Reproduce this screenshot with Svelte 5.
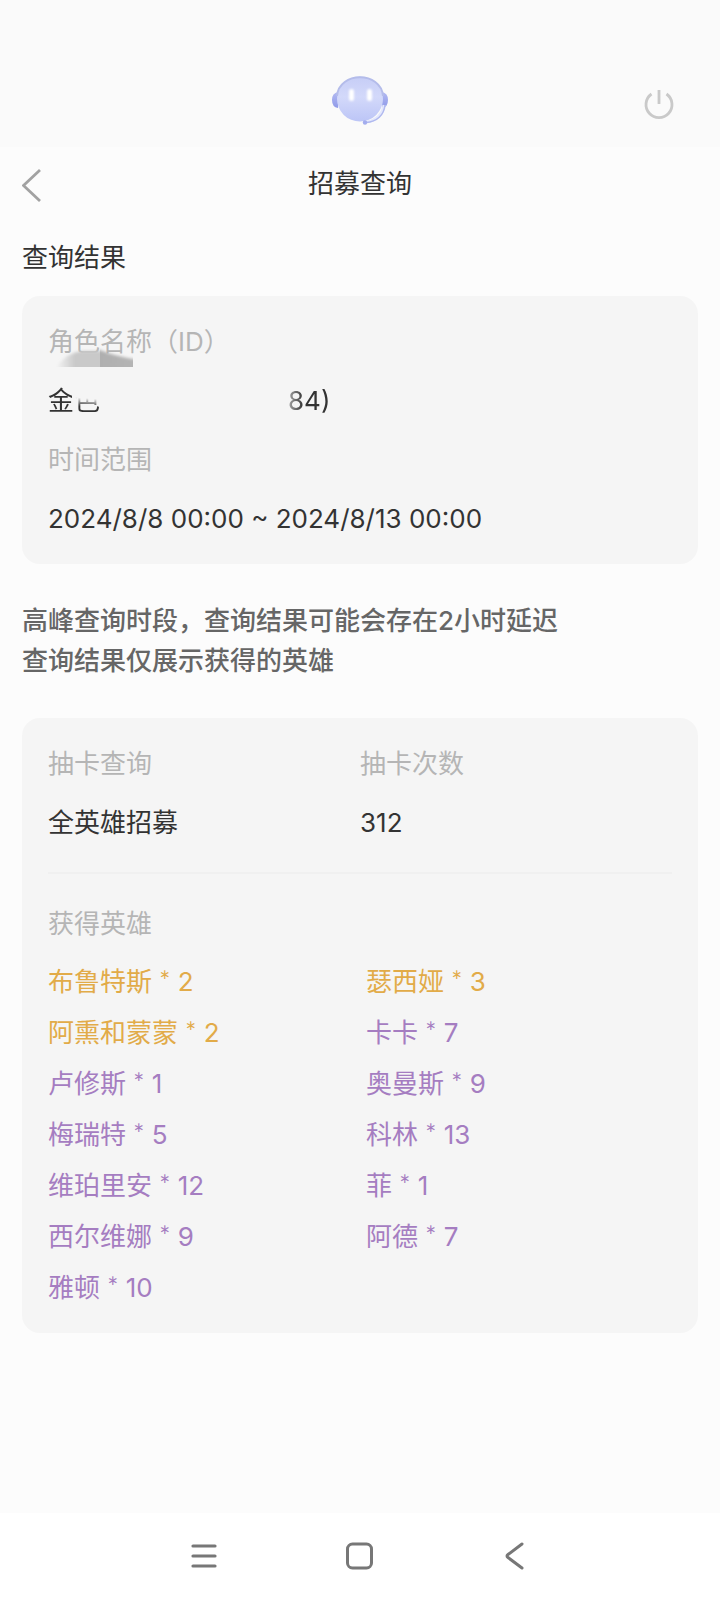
<script>
  const result = {
    nameStart: "金色",
    nameEnd: "84)",
    range: "2024/8/8 00:00 ~ 2024/8/13 00:00",
    pool: "全英雄招募",
    count: 312,
  };

  const heroes = [
    { name: "布鲁特斯", count: 2, rank: "gold" },
    { name: "瑟西娅", count: 3, rank: "gold" },
    { name: "阿熏和蒙蒙", count: 2, rank: "gold" },
    { name: "卡卡", count: 7, rank: "purple" },
    { name: "卢修斯", count: 1, rank: "purple" },
    { name: "奥曼斯", count: 9, rank: "purple" },
    { name: "梅瑞特", count: 5, rank: "purple" },
    { name: "科林", count: 13, rank: "purple" },
    { name: "维珀里安", count: 12, rank: "purple" },
    { name: "菲", count: 1, rank: "purple" },
    { name: "西尔维娜", count: 9, rank: "purple" },
    { name: "阿德", count: 7, rank: "purple" },
    { name: "雅顿", count: 10, rank: "purple" },
  ];
</script>

<div class="page">
  <header class="top-bar">
    <svg class="logo" viewBox="0 0 60 54" aria-hidden="true">
      <defs>
        <linearGradient id="face" x1="0" y1="0" x2="0" y2="1">
          <stop offset="0" stop-color="#c6cdf6" />
          <stop offset="0.45" stop-color="#d3d9fa" />
          <stop offset="1" stop-color="#bcc5f6" />
        </linearGradient>
        <linearGradient id="ear" x1="0" y1="0" x2="0" y2="1">
          <stop offset="0" stop-color="#b3baf2" />
          <stop offset="1" stop-color="#8f9ae9" />
        </linearGradient>
        <filter id="glow" x="-1" y="-1" width="3" height="3">
          <feGaussianBlur stdDeviation="0.9" />
        </filter>
      </defs>
      <path d="M8 19Q2 20 2 27Q2 34 8 35ZM52 19Q58 20 58 27Q58 34 52 35Z" fill="url(#ear)" />
      <ellipse cx="30" cy="26" rx="23" ry="22.5" fill="url(#face)" />
      <path d="M7 23C9 -2 51 -2 53 23" fill="none" stroke="#b4bcea" stroke-width="2" />
      <path d="M54 32C53 41 46 48 36 49" fill="none" stroke="#e4e8fc" stroke-width="3" />
      <path d="M55 32C54 42 47 49 36 49.500" fill="none" stroke="#b0b9ef" stroke-width="1.500" />
      <circle cx="35" cy="49.500" r="2.200" fill="#a3adee" />
      <g fill="#fff" filter="url(#glow)">
        <rect x="19" y="16" width="5" height="12" rx="2.500" />
        <rect x="37" y="16" width="5" height="12" rx="2.500" />
      </g>
    </svg>
    <button class="icon-button power" aria-label="退出">
      <svg width="32" height="32" viewBox="0 0 32 32">
        <path d="M8.500 6A13 13 0 1 0 23.500 6M16 2V16" fill="none" stroke="#c9c9c9" stroke-width="2.800" />
      </svg>
    </button>
  </header>

  <div class="title-bar">
    <button class="icon-button" aria-label="返回">
      <svg width="20" height="36" viewBox="0 0 20 36">
        <path d="M18 4L1.500 19.500L18 35" fill="none" stroke="#a2a2a2" stroke-width="2.800" />
      </svg>
    </button>
    <h1>招募查询</h1>
  </div>

  <main>
    <h2>查询结果</h2>

    <dl class="card info">
      <dt>
        角色名称（ID）
        <svg class="smudge" width="78" height="20" viewBox="0 0 78 20" aria-hidden="true">
          <defs>
            <linearGradient id="smudge-light">
              <stop offset="0" stop-color="#c9c9c9" stop-opacity="0" />
              <stop offset="0.35" stop-color="#c9c9c9" />
            </linearGradient>
            <linearGradient id="smudge-dark">
              <stop offset="0" stop-color="#adadad" />
              <stop offset="1" stop-color="#b6b6b6" />
            </linearGradient>
            <filter id="smudge-soft">
              <feGaussianBlur stdDeviation="1.500" />
            </filter>
            <clipPath id="smudge-left"><path d="M0 0H44V20H0Z" /></clipPath>
            <clipPath id="smudge-right"><path d="M44 0H77V20H44Z" /></clipPath>
          </defs>
          <g clip-path="url(#smudge-left)">
            <path d="M0 30V20Q12 5 26 4H54V30Z" fill="url(#smudge-light)" filter="url(#smudge-soft)" />
          </g>
          <g clip-path="url(#smudge-right)">
            <path d="M34 3H44Q60 10 90 14V30H34Z" fill="url(#smudge-dark)" filter="url(#smudge-soft)" />
          </g>
        </svg>
      </dt>
      <dd class="name">
        <span class="name-start">{result.nameStart}</span>
        <span class="name-end">{result.nameEnd}</span>
      </dd>
      <dt>时间范围</dt>
      <dd>{result.range}</dd>
    </dl>

    <p class="note">
      高峰查询时段，查询结果可能会存在2小时延迟<br />
      查询结果仅展示获得的英雄
    </p>

    <section class="card">
      <div class="summary">
        <dl>
          <dt>抽卡查询</dt>
          <dd>{result.pool}</dd>
        </dl>
        <dl>
          <dt>抽卡次数</dt>
          <dd>{result.count}</dd>
        </dl>
      </div>
      <hr />
      <h3>获得英雄</h3>
      <ul class="heroes">
        {#each heroes as hero}
          <li class={hero.rank}>{hero.name} <span class="star">*</span> {hero.count}</li>
        {/each}
      </ul>
    </section>
  </main>

  <nav>
    <button class="icon-button" aria-label="菜单">
      <svg width="28" height="28" viewBox="0 0 28 28">
        <path d="M3 4H25M3 14H25M3 24H25" stroke="#777" stroke-width="3.200" stroke-linecap="round" />
      </svg>
    </button>
    <button class="icon-button" aria-label="主页">
      <svg width="28" height="28" viewBox="0 0 28 28">
        <rect x="1.500" y="2" width="24" height="24" rx="5" fill="none" stroke="#777" stroke-width="3" />
      </svg>
    </button>
    <button class="icon-button" aria-label="后退">
      <svg width="28" height="28" viewBox="0 0 28 28">
        <path d="M20 2L6 12.500Q4 14 6 15.500L20 26" fill="none" stroke="#777" stroke-width="3" stroke-linecap="round" />
      </svg>
    </button>
  </nav>
</div>

<style>
  :global(body) {
    margin: 0;
    background: #fcfcfc;
  }

  .page {
    min-height: 100vh;
    display: flex;
    flex-direction: column;
    font-family: Inter, "Noto Sans CJK SC", sans-serif;
    font-size: 26px;
    line-height: 39px;
    color: #333;
  }

  h1,
  h2,
  h3,
  p,
  dl,
  dd,
  ul {
    margin: 0;
    padding: 0;
    font-size: 26px;
    font-weight: 400;
  }

  .icon-button {
    display: flex;
    padding: 0;
    border: none;
    background: none;
    cursor: pointer;
  }

  /* Header */
  .top-bar {
    display: grid;
    grid-template-columns: 1fr auto 1fr;
    align-items: center;
    padding: 73px 45px 20px;
    background: #fafafa;
  }

  .logo {
    grid-column: 2;
    width: 60px;
    height: 54px;
  }

  .power {
    justify-self: end;
    margin-top: 8px;
  }

  .title-bar {
    display: grid;
    grid-template-columns: 1fr auto 1fr;
    align-items: center;
    padding: 17px 22px;
  }

  /* Content */
  main {
    flex-grow: 1;
    padding: 18px 22px;
  }

  .card {
    padding: 26px;
    border-radius: 18px;
    background: #f5f5f5;
  }

  dt,
  h3 {
    color: #b5b5b5;
  }

  .info,
  .summary dl {
    display: flex;
    flex-direction: column;
    gap: 20px;
  }

  .info {
    margin-top: 19px;
  }

  .info dt {
    position: relative;
  }

  .smudge {
    position: absolute;
    left: 8px;
    top: 25px;
  }

  .name {
    display: flex;
    gap: 188px;
  }

  /* The middle of the name is hidden, the visible ends fade out */
  .name-start {
    mask-image: linear-gradient(185deg, transparent 42%, #000 62%), linear-gradient(#000, #000);
    mask-size: 100% 100%, 24px 100%;
    mask-repeat: no-repeat;
  }

  .name-end {
    mask-image: linear-gradient(90deg, rgba(0, 0, 0, 0.4), #000 36%);
  }

  .note {
    margin: 37px 0;
    font-weight: 500;
    line-height: 40px;
    color: #666;
  }

  .summary {
    display: grid;
    grid-template-columns: 1fr 1fr;
  }

  hr {
    margin: 30px 0;
    border: none;
    border-top: 2px solid #f0f0f0;
  }

  .heroes {
    display: grid;
    grid-template-columns: 1fr 1fr;
    gap: 12px;
    margin-top: 19px;
    list-style: none;
  }

  .star {
    font-family: Lato, sans-serif;
  }

  .gold {
    color: #e2ab48;
  }

  .purple {
    color: #a57dc1;
  }

  /* System navigation */
  nav {
    display: flex;
    justify-content: center;
    gap: 128px;
    padding: 29px 0 30px;
    background: #fff;
  }
</style>
